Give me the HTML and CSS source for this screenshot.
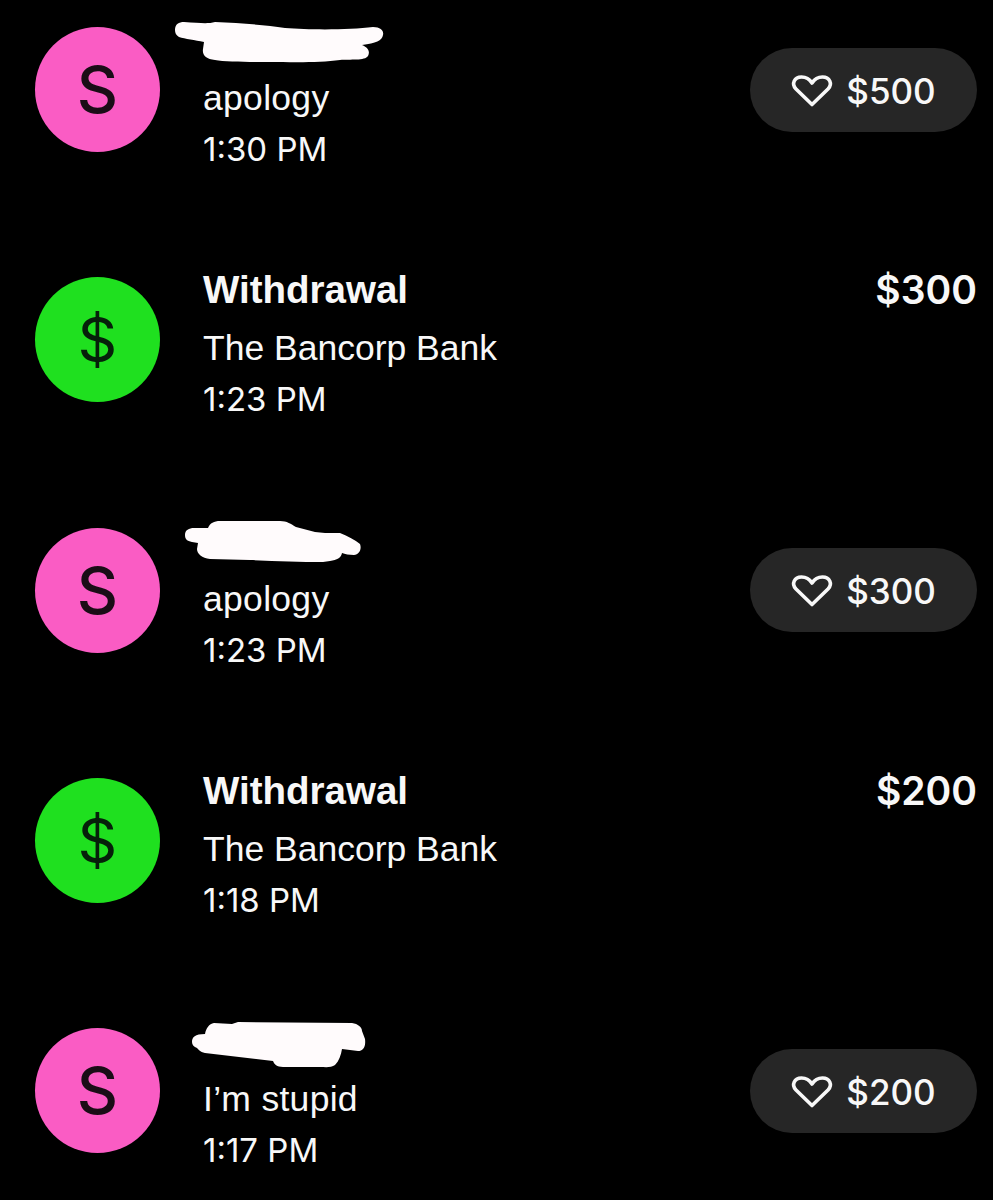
FILE: index.html
```html
<!DOCTYPE html>
<html lang="en">
<head>
    <meta charset="UTF-8">
    <title>Activity</title>
    <link rel="stylesheet" href="styles.css">
</head>
<body>
    <main class="activity">
        <div class="row">
            <div class="avatar pink">S</div>
            <div class="info">
                <div class="title"></div>
                <div class="memo wide">apology</div>
                <div class="time">1:30 PM</div>
            </div>
            <div class="pill">
                <svg class="heart" viewBox="0 0 42 32"><path d="M21 29.5 L5 14 C0 8.5 3.5 2 10.5 2 C15 2 18.5 4 21 8 C23.5 4 27 2 31.5 2 C38.5 2 42 8.5 37 14 Z"/></svg>
                <span>$500</span>
            </div>
            <svg class="redact" viewBox="165 15 225 60"><path d="M175 30 C175 24 179 22 184 22 C200 23 208 24 215 22 C240 23 265 25 285 28 C310 30 350 30 373 27 C381 27 384 31 383 35 C382 41 376 43 362 45 C369 48 370 52 368 56 C365 61 350 59 340 60 C320 63 290 62 270 62 C250 62 225 62 215 60 C206 59 202 55 203 49 L204 42 C195 40 185 39 179 37 C176 35 175 33 175 30 Z"/></svg>
        </div>

        <div class="row">
            <div class="avatar green">$</div>
            <div class="info">
                <div class="title">Withdrawal</div>
                <div class="memo">The Bancorp Bank</div>
                <div class="time">1:23 PM</div>
            </div>
            <div class="amount">$300</div>
        </div>

        <div class="row">
            <div class="avatar pink">S</div>
            <div class="info">
                <div class="title"></div>
                <div class="memo wide">apology</div>
                <div class="time">1:23 PM</div>
            </div>
            <div class="pill">
                <svg class="heart" viewBox="0 0 42 32"><path d="M21 29.5 L5 14 C0 8.5 3.5 2 10.5 2 C15 2 18.5 4 21 8 C23.5 4 27 2 31.5 2 C38.5 2 42 8.5 37 14 Z"/></svg>
                <span>$300</span>
            </div>
            <svg class="redact" viewBox="165 516 225 60"><path d="M185 535 C185 530 189 528 194 528 L208 528 C210 523 214 521 220 521 L280 521 C287 521 291 524 296 527 L315 532 L325 533 L340 533 C348 536 355 540 360 544 C362 549 359 555 354 555 C349 555 345 554 342 553 C341 558 337 560 330 561 L323 562 C300 562 275 561 250 560 L210 559 C202 558 197 554 197 549 L198 543 L192 542 C187 541 185 539 185 535 Z"/></svg>
        </div>

        <div class="row">
            <div class="avatar green">$</div>
            <div class="info">
                <div class="title">Withdrawal</div>
                <div class="memo">The Bancorp Bank</div>
                <div class="time">1:18 PM</div>
            </div>
            <div class="amount">$200</div>
        </div>

        <div class="row">
            <div class="avatar pink">S</div>
            <div class="info">
                <div class="title"></div>
                <div class="memo wide">I’m stupid</div>
                <div class="time">1:17 PM</div>
            </div>
            <div class="pill">
                <svg class="heart" viewBox="0 0 42 32"><path d="M21 29.5 L5 14 C0 8.5 3.5 2 10.5 2 C15 2 18.5 4 21 8 C23.5 4 27 2 31.5 2 C38.5 2 42 8.5 37 14 Z"/></svg>
                <span>$200</span>
            </div>
            <svg class="redact" viewBox="165 1017 225 60"><path d="M192 1043 C192 1038 195 1035 205 1035 C206 1029 209 1025 214 1024 L232 1025 L238 1023 L352 1024 C358 1025 362 1028 362 1032 L365 1040 C366 1048 363 1052 358 1052 L342 1050 C341 1056 339 1062 335 1066 C331 1069 325 1068 320 1068 L283 1068 C277 1068 274 1065 273 1062 L205 1054 C200 1053 198 1050 197 1049 C194 1048 192 1046 192 1043 Z"/></svg>
        </div>
    </main>
</body>
</html>
```

FILE: styles.css
```css
html, body {
    margin: 0;
    padding: 0;
    background: #000;
}

body {
    height: 1200px;
    overflow: hidden;
    color: #f8f8f8;
    font-family: "Inter", "Liberation Sans", sans-serif;
}

.activity {
    display: flex;
    flex-direction: column;
    gap: 125.25px;
    padding: 27px 16px 0 35px;
}

.row {
    position: relative;
    display: flex;
    align-items: flex-start;
    height: 125px;
}

.avatar {
    flex: none;
    width: 125px;
    height: 125px;
    border-radius: 50%;
    display: flex;
    align-items: center;
    justify-content: center;
    color: #1a0d16;
    font-size: 64px;
    font-weight: 500;
}

.pink {
    background: #fa5cc4;
}

.green {
    background: #1fe01f;
    color: #06200a;
    font-size: 62px;
    font-weight: 400;
}

.info {
    flex: 1;
    margin: -12px 0 0 43px;
}

.title {
    height: 50px;
    font-family: "Liberation Sans", sans-serif;
    font-size: 38.5px;
    line-height: 50px;
    font-weight: 700;
}

.memo {
    height: 51px;
    margin-top: 8px;
    font-family: "Liberation Sans", sans-serif;
    font-size: 35.5px;
    line-height: 51px;
}

.wide {
    letter-spacing: 0.3px;
}

.time {
    height: 51px;
    font-size: 33px;
    line-height: 51px;
}

.amount {
    margin-top: -12px;
    font-size: 39px;
    line-height: 50px;
    font-weight: 600;
}

.pill {
    flex: none;
    align-self: center;
    width: 227px;
    height: 84px;
    box-sizing: border-box;
    padding-top: 2px;
    border-radius: 42px;
    background: #262626;
    display: flex;
    align-items: center;
    justify-content: center;
    gap: 13px;
    font-size: 35px;
    font-weight: 500;
}

.heart {
    width: 42px;
    height: 32px;
    fill: none;
    stroke: #f8f8f8;
    stroke-width: 3.6;
    stroke-linejoin: round;
    overflow: visible;
}

/* marker scribble over the sender's name */
.redact {
    position: absolute;
    left: 130px;
    top: -12px;
    width: 225px;
    height: 60px;
    fill: #fffbfc;
}
```
